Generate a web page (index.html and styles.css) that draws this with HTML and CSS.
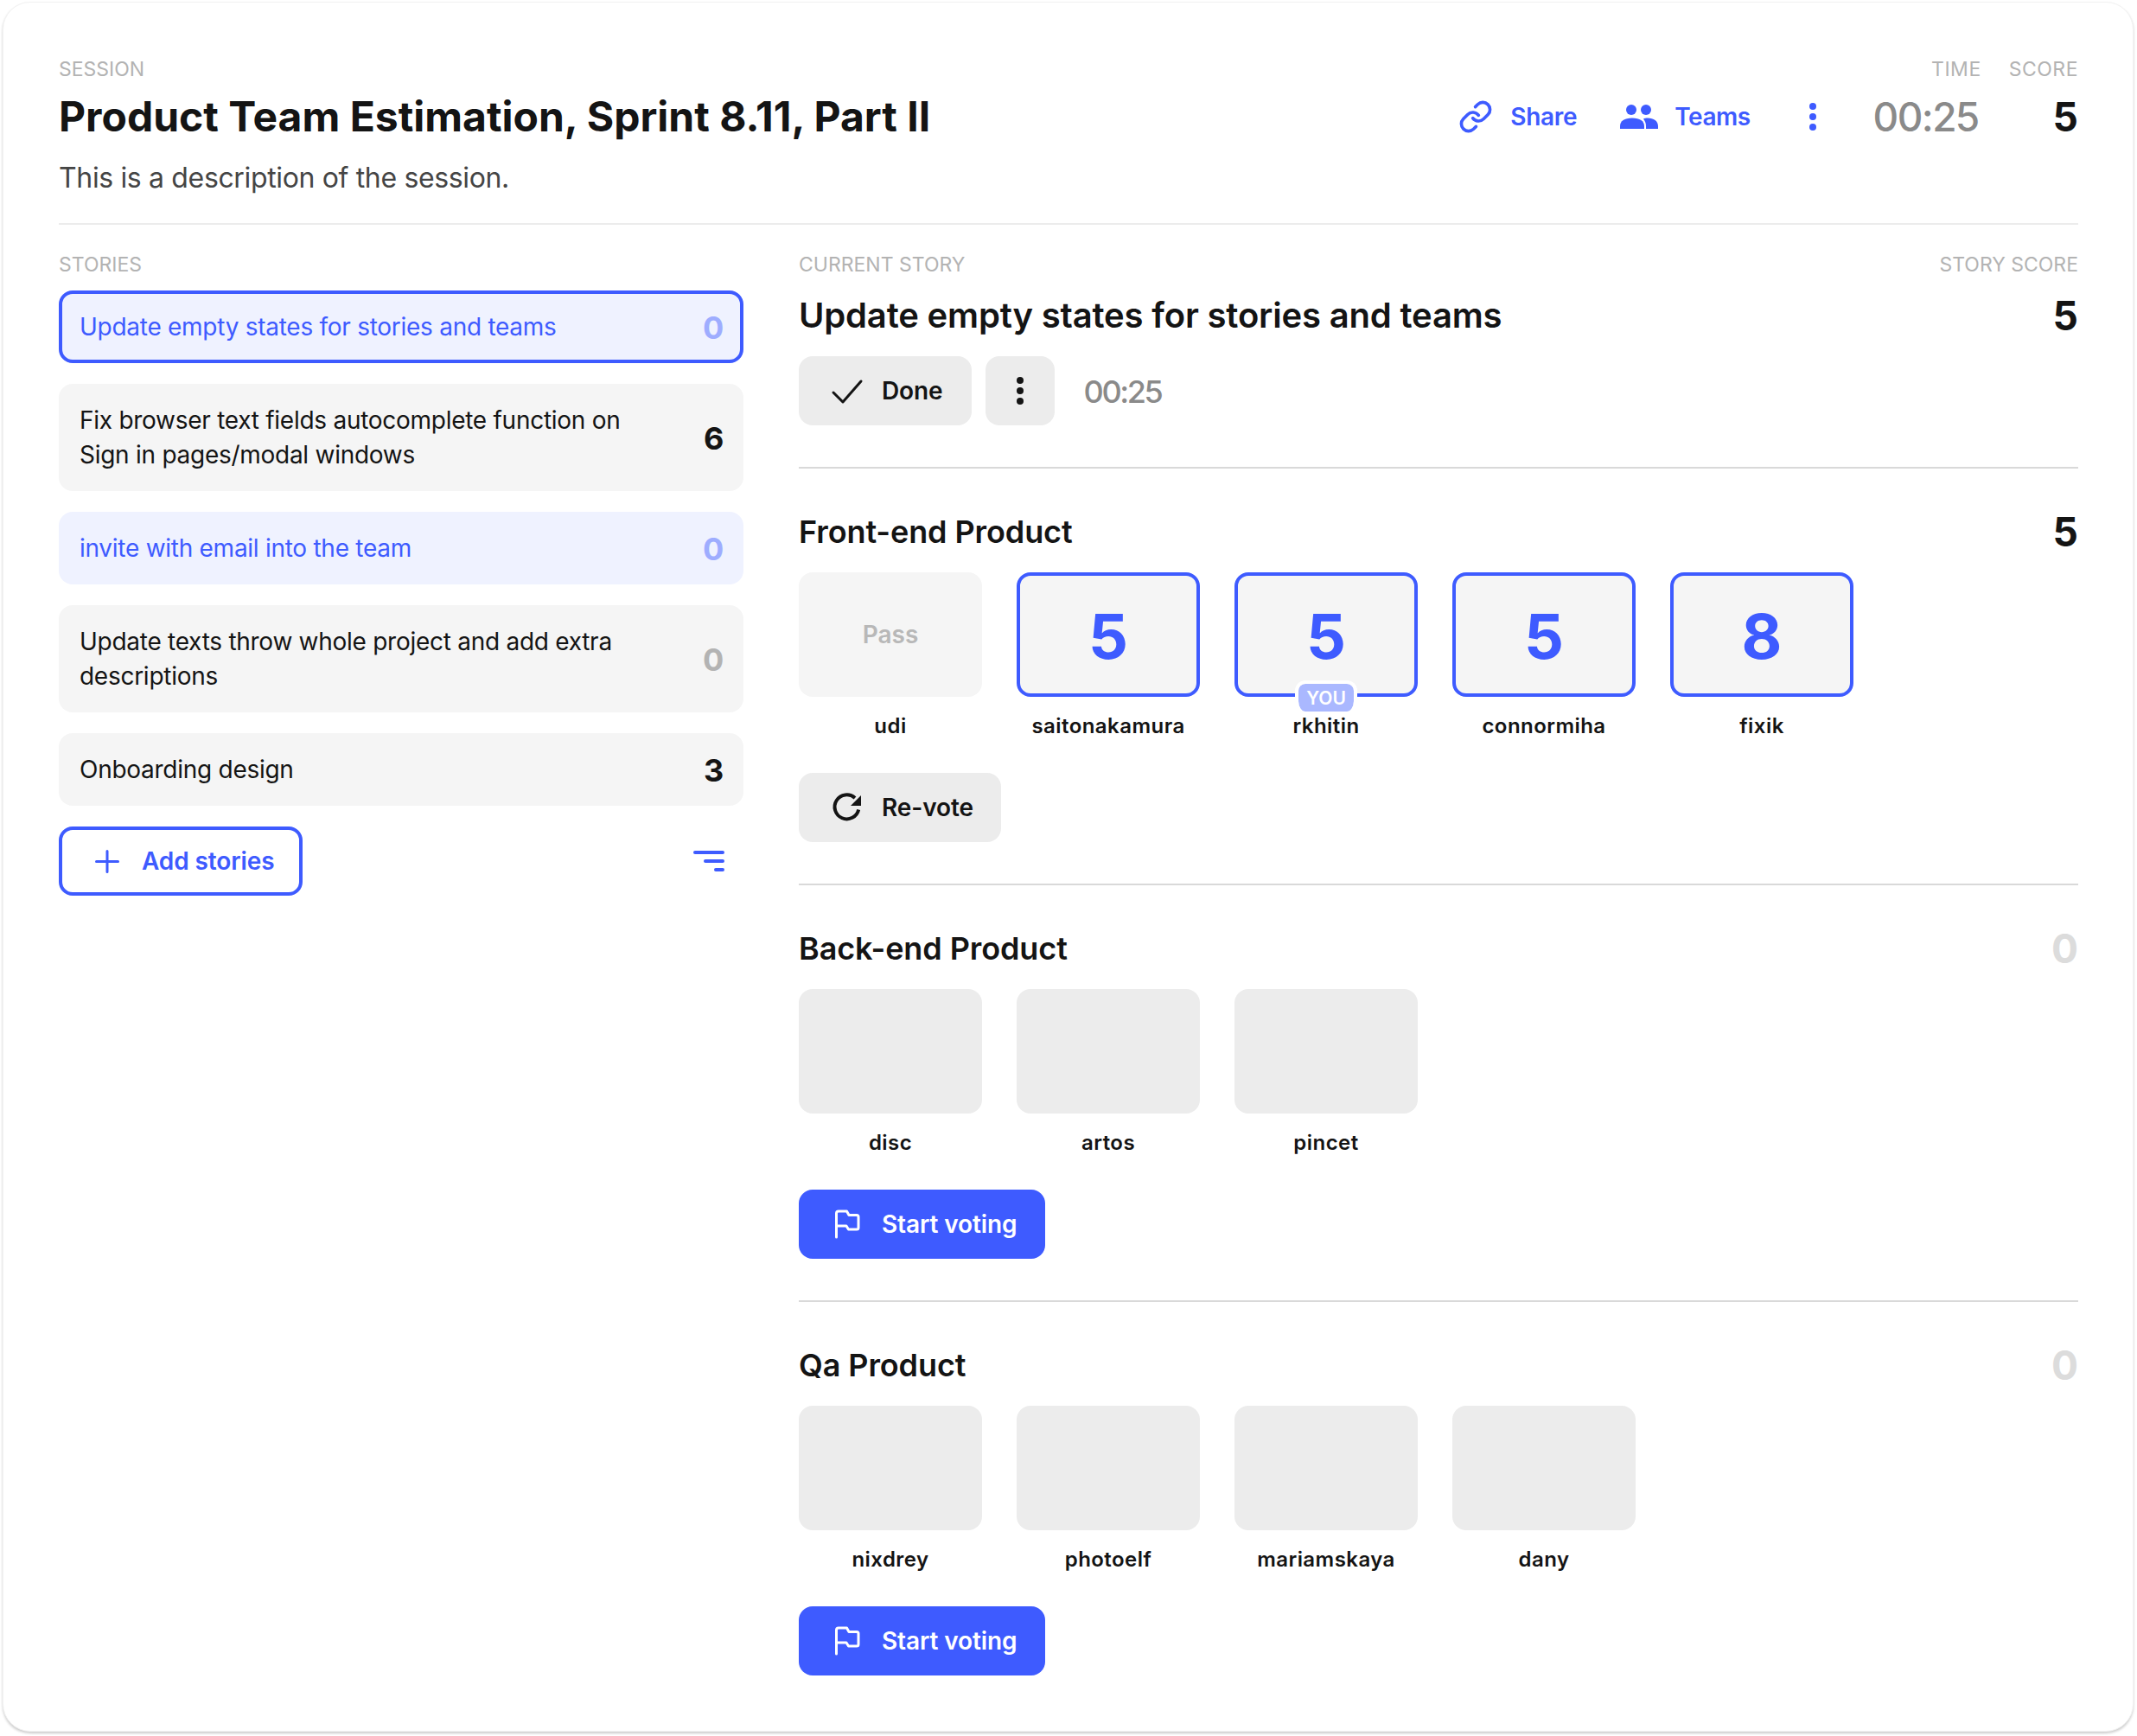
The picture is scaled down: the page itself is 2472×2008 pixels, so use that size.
FILE: index.html
```html
<!DOCTYPE html>
<html lang="en">
<head>
    <meta charset="UTF-8">
    <meta name="viewport" content="width=device-width, initial-scale=1.0">
    <title>Product Team Estimation</title>
    <link rel="stylesheet" href="styles.css">
</head>
<body>
    <div class="card">
        <header class="header">
            <div class="header-left">
                <div class="label">Session</div>
                <h1>Product Team Estimation, Sprint 8.11, Part II</h1>
                <p class="description">This is a description of the session.</p>
            </div>
            <div class="header-right">
                <div class="actions">
                    <a class="action">
                        <svg class="icon" viewBox="0 0 24 24" fill="none" stroke="currentColor" stroke-width="2.200" stroke-linecap="round" stroke-linejoin="round"><path d="M10 13a5 5 0 0 0 7.540.540l3-3a5 5 0 0 0-7.070-7.070l-1.720 1.710"/><path d="M14 11a5 5 0 0 0-7.540-.540l-3 3a5 5 0 0 0 7.070 7.070l1.710-1.710"/></svg>
                        Share
                    </a>
                    <a class="action action-teams">
                        <svg class="icon icon-wide" viewBox="0 0 48 30" fill="currentColor"><circle cx="15" cy="7" r="6"/><circle cx="32" cy="7" r="6"/><path d="M2 29v-3c0-6 5-9.500 14-9.500s14 3.500 14 9.500v3z"/><path d="M32 29v-3c0-3.500-1-6-3-8.500 1.200-.6 2.800-1 5-1 7 0 12 3.500 12 9.500v3z"/></svg>
                        Teams
                    </a>
                    <a class="action action-more">
                        <svg class="icon" viewBox="0 0 40 40" fill="currentColor"><circle cx="20" cy="8" r="4"/><circle cx="20" cy="20" r="4"/><circle cx="20" cy="32" r="4"/></svg>
                    </a>
                </div>
                <div class="stat">
                    <div class="label">Time</div>
                    <div class="stat-time">00:25</div>
                </div>
                <div class="stat">
                    <div class="label">Score</div>
                    <div class="stat-score">5</div>
                </div>
            </div>
        </header>

        <div class="columns">
            <aside class="stories">
                <div class="label">Stories</div>
                <ul class="story-list">
                    <li class="story story-current">
                        <span class="story-text">Update empty states for stories and teams</span>
                        <span class="story-score">0</span>
                    </li>
                    <li class="story">
                        <span class="story-text">Fix browser text fields autocomplete function on Sign in pages/modal windows</span>
                        <span class="story-score">6</span>
                    </li>
                    <li class="story story-active">
                        <span class="story-text">invite with email into the team</span>
                        <span class="story-score">0</span>
                    </li>
                    <li class="story">
                        <span class="story-text">Update texts throw whole project and add extra descriptions</span>
                        <span class="story-score muted">0</span>
                    </li>
                    <li class="story">
                        <span class="story-text">Onboarding design</span>
                        <span class="story-score">3</span>
                    </li>
                </ul>
                <div class="stories-footer">
                    <button class="btn btn-outline">
                        <svg class="icon" viewBox="0 0 40 40" fill="none" stroke="currentColor" stroke-width="3" stroke-linecap="round"><path d="M24 8.500v24M11.500 20.500h25"/></svg>
                        Add stories
                    </button>
                    <div class="sort-icon"><span></span><span></span><span></span></div>
                </div>
            </aside>

            <main class="current">
                <div class="current-labels">
                    <div class="label">Current story</div>
                    <div class="label">Story score</div>
                </div>
                <div class="title-row">
                    <h2>Update empty states for stories and teams</h2>
                    <span class="score">5</span>
                </div>
                <div class="current-actions">
                    <button class="btn btn-gray btn-done">
                        <svg class="icon" viewBox="0 0 40 40" fill="none" stroke="currentColor" stroke-width="3" stroke-linecap="round" stroke-linejoin="round"><path d="M8 22l11 11L40 9"/></svg>
                        Done
                    </button>
                    <button class="btn btn-gray btn-square">
                        <svg class="icon" viewBox="0 0 40 40" fill="currentColor"><circle cx="20" cy="8" r="4"/><circle cx="20" cy="20" r="4"/><circle cx="20" cy="32" r="4"/></svg>
                    </button>
                    <span class="current-time">00:25</span>
                </div>

                <section class="team">
                    <div class="title-row team-row">
                        <h3>Front-end Product</h3>
                        <span class="score">5</span>
                    </div>
                    <div class="voters">
                        <div class="voter">
                            <div class="vote vote-pass">Pass</div>
                            <div class="voter-name">udi</div>
                        </div>
                        <div class="voter">
                            <div class="vote vote-done">5</div>
                            <div class="voter-name">saitonakamura</div>
                        </div>
                        <div class="voter">
                            <div class="vote vote-done">5<span class="you">YOU</span></div>
                            <div class="voter-name">rkhitin</div>
                        </div>
                        <div class="voter">
                            <div class="vote vote-done">5</div>
                            <div class="voter-name">connormiha</div>
                        </div>
                        <div class="voter">
                            <div class="vote vote-done">8</div>
                            <div class="voter-name">fixik</div>
                        </div>
                    </div>
                    <button class="btn btn-gray">
                        <svg class="icon" viewBox="0 0 40 40" fill="none" stroke="currentColor" stroke-width="4"><path d="M33 9A14 14 0 1 0 37.200 22.500"/><path d="M40 6v12H28z" fill="currentColor" stroke="none"/></svg>
                        Re-vote
                    </button>
                </section>

                <section class="team">
                    <div class="title-row team-row">
                        <h3>Back-end Product</h3>
                        <span class="score score-empty">0</span>
                    </div>
                    <div class="voters">
                        <div class="voter"><div class="vote"></div><div class="voter-name">disc</div></div>
                        <div class="voter"><div class="vote"></div><div class="voter-name">artos</div></div>
                        <div class="voter"><div class="vote"></div><div class="voter-name">pincet</div></div>
                    </div>
                    <button class="btn btn-blue">
                        <svg class="icon" viewBox="0 0 40 40" fill="none" stroke="currentColor" stroke-width="3" stroke-linecap="round" stroke-linejoin="round"><path d="M11.500 35V7.500Q11.500 5 14 5H23.500L26 9.500H35Q37 9.500 37 11.500V24Q37 26 35 26H25.500L23 22H11.500"/></svg>
                        Start voting
                    </button>
                </section>

                <section class="team">
                    <div class="title-row team-row">
                        <h3>Qa Product</h3>
                        <span class="score score-empty">0</span>
                    </div>
                    <div class="voters">
                        <div class="voter"><div class="vote"></div><div class="voter-name">nixdrey</div></div>
                        <div class="voter"><div class="vote"></div><div class="voter-name">photoelf</div></div>
                        <div class="voter"><div class="vote"></div><div class="voter-name">mariamskaya</div></div>
                        <div class="voter"><div class="vote"></div><div class="voter-name">dany</div></div>
                    </div>
                    <button class="btn btn-blue">
                        <svg class="icon" viewBox="0 0 40 40" fill="none" stroke="currentColor" stroke-width="3" stroke-linecap="round" stroke-linejoin="round"><path d="M11.500 35V7.500Q11.500 5 14 5H23.500L26 9.500H35Q37 9.500 37 11.500V24Q37 26 35 26H25.500L23 22H11.500"/></svg>
                        Start voting
                    </button>
                </section>
            </main>
        </div>
    </div>
</body>
</html>
```

FILE: styles.css
```css
* {
    box-sizing: border-box;
}

body {
    font-family: 'Inter', 'Liberation Sans', sans-serif;
    background-color: #fff;
    color: #141414;
    margin: 0;
    padding: 2px 4px 5px 3px;
}

h1, h2, h3, p, ul {
    margin: 0;
    padding: 0;
}

.card {
    background-color: #fff;
    border: 1px solid #f2f2f2;
    border-radius: 32px;
    box-shadow: 0 2px 3px rgba(0, 0, 0, 0.2);
    padding: 63px 63px 64px 64px;
}

.label {
    font-size: 23px;
    line-height: 28px;
    color: #b3b3b3;
    text-transform: uppercase;
}

/* Header */
.header {
    display: flex;
    justify-content: space-between;
    padding-bottom: 32px;
    border-bottom: 2px solid #ececec;
}

h1 {
    font-size: 48px;
    line-height: 56px;
    font-weight: 700;
    margin-top: 13px;
}

.description {
    font-size: 32px;
    line-height: 40px;
    letter-spacing: -0.35px;
    color: #454545;
    margin-top: 23px;
}

.header-right {
    display: flex;
    gap: 32px;
}

.actions {
    display: flex;
    align-items: center;
    gap: 48px;
    height: 56px;
    margin-top: 41px;
    margin-right: 18px;
}

.action {
    display: flex;
    align-items: center;
    gap: 20px;
    font-size: 28px;
    font-weight: 600;
    letter-spacing: -0.3px;
    color: #3e5bff;
}

.action-teams {
    gap: 17px;
    letter-spacing: -0.5px;
}

.action-more {
    margin-left: 4px;
}

.stat {
    text-align: right;
}

.stat .label {
    letter-spacing: 0.5px;
}

.stat-time, .stat-score {
    font-size: 46px;
    line-height: 56px;
    margin-top: 13px;
}

.stat-time {
    color: #8a8a8a;
    font-weight: 500;
    letter-spacing: -1.6px;
    padding-right: 3px;
}

.stat-score {
    font-weight: 700;
}

.icon {
    width: 40px;
    height: 40px;
    flex-shrink: 0;
    overflow: visible;
}

.icon-wide {
    width: 48px;
    height: 30px;
}

/* Columns */
.columns {
    display: flex;
    gap: 64px;
    padding-top: 32px;
}

.stories {
    width: 792px;
    flex-shrink: 0;
}

.current {
    flex: 1;
}

/* Stories */
.story-list {
    list-style-type: none;
    display: flex;
    flex-direction: column;
    gap: 24px;
    margin-top: 16px;
}

.story {
    display: flex;
    align-items: center;
    justify-content: space-between;
    gap: 40px;
    padding: 22px 23px 22px 24px;
    background-color: #f5f5f5;
    border-radius: 16px;
    font-size: 28px;
    line-height: 40px;
    letter-spacing: -0.27px;
}

.story-text {
    max-width: 680px;
}

.story-score {
    font-size: 36px;
    line-height: 38px;
    font-weight: 700;
    padding-top: 2px;
}

.story-score.muted {
    color: #b3b3b3;
}

.story-current, .story-active {
    background-color: #eff2ff;
    color: #3e5bff;
}

.story-current {
    border: 4px solid #3e5bff;
    padding: 18px 19px 18px 20px;
}

.story-current .story-score, .story-active .story-score {
    color: #9eadff;
}

.stories-footer {
    display: flex;
    align-items: center;
    justify-content: space-between;
    margin-top: 24px;
    padding-right: 22px;
}

.sort-icon {
    display: flex;
    flex-direction: column;
    align-items: flex-end;
    gap: 6px;
}

.sort-icon span {
    display: block;
    height: 4px;
    width: 36px;
    border-radius: 2px;
    background-color: #3e5bff;
}

.sort-icon span:nth-child(2) {
    width: 24px;
}

.sort-icon span:nth-child(3) {
    width: 12px;
}

/* Buttons */
.btn {
    display: inline-flex;
    align-items: center;
    gap: 24px;
    height: 80px;
    padding: 0 32px;
    border: none;
    border-radius: 16px;
    font-family: inherit;
    font-size: 28px;
    font-weight: 600;
    letter-spacing: -0.1px;
    color: #141414;
}

.btn-gray {
    background-color: #ececec;
}

.btn-done {
    padding-right: 33px;
}

.btn-blue {
    background-color: #3e5bff;
    color: #fff;
    letter-spacing: -0.1px;
}

.btn-outline {
    background-color: #fff;
    border: 4px solid #3e5bff;
    color: #3e5bff;
    padding: 0 28px;
}

.btn-square {
    width: 80px;
    padding: 0 20px;
}

/* Current story */
.current-labels, .title-row {
    display: flex;
    align-items: center;
    justify-content: space-between;
}

.title-row {
    margin-top: 21px;
}

h2 {
    font-size: 40px;
    line-height: 48px;
    font-weight: 600;
    letter-spacing: -0.17px;
}

h3 {
    font-size: 36px;
    line-height: 48px;
    font-weight: 600;
    letter-spacing: -0.1px;
}

.score {
    font-size: 46px;
    line-height: 48px;
    font-weight: 700;
}

.score-empty {
    color: #dcdcdc;
}

.current-actions {
    display: flex;
    align-items: center;
    gap: 16px;
    margin-top: 23px;
    padding-bottom: 48px;
}

.current-time {
    font-size: 36px;
    letter-spacing: -2.400px;
    color: #8a8a8a;
    font-weight: 500;
    margin-left: 18px;
    padding-top: 2px;
}

.team {
    border-top: 2px solid #d9d9d9;
    padding: 48px 0;
}

.team:last-child {
    padding-bottom: 0;
}

.team-row {
    margin-top: 1px;
}

.voters {
    display: flex;
    gap: 40px;
    margin: 23px 0 38px;
}

.voter {
    width: 212px;
}

.vote {
    position: relative;
    display: flex;
    align-items: center;
    justify-content: center;
    height: 144px;
    border-radius: 16px;
    background-color: #ececec;
}

.vote-pass {
    background-color: #f5f5f5;
    color: #b8b8b8;
    font-size: 28px;
    font-weight: 600;
}

.vote-done {
    background-color: #f5f5f5;
    border: 4px solid #3e5bff;
    color: #3e5bff;
    font-size: 72px;
    font-weight: 700;
    padding-top: 2px;
}

.you {
    position: absolute;
    left: 50%;
    bottom: -21px;
    transform: translateX(-50%);
    width: 72px;
    height: 36px;
    border: 4px solid #fff;
    border-bottom-width: 0;
    border-radius: 12px;
    background-color: #aab8ff;
    background-clip: padding-box;
    color: #fff;
    font-size: 21px;
    line-height: 33px;
    font-weight: 600;
    text-align: center;
}

.voter-name {
    margin-top: 18px;
    font-size: 24px;
    line-height: 32px;
    font-weight: 600;
    letter-spacing: 0.45px;
    text-align: center;
}
```
